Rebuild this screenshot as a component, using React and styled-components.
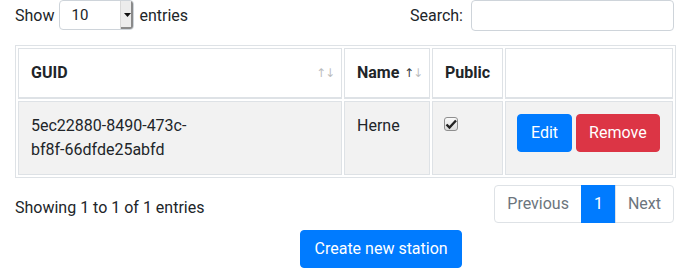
import styled, { createGlobalStyle } from 'styled-components';

const GlobalStyle = createGlobalStyle`
  *, *::before, *::after { box-sizing: border-box; }
  body {
    margin: 0;
    background: #fff;
    font-family: Roboto, "Liberation Sans", sans-serif;
    font-size: 16px;
    line-height: 1.5;
    color: #212529;
  }
`;

const Page = styled.div`
  width: 659px;
  margin-left: 15px;
  display: flex;
  flex-direction: column;
`;

const TopBar = styled.div`
  height: 31px;
  display: flex;
  align-items: center;
  justify-content: space-between;
`;

const Label = styled.label`
  display: flex;
  align-items: center;
  gap: ${(p) => p.gap || 5}px;
`;

const SelectBox = styled.div`
  width: 75px;
  height: 30px;
  margin-top: -1px;
  display: flex;
  border: 1px solid #ced4da;
  border-radius: 4px;
  background: #fff;
  overflow: hidden;
`;

const SelectValue = styled.span`
  flex: 1;
  padding-left: 11px;
  line-height: 28px;
  font-size: 15px;
`;

const SelectArrow = styled.span`
  width: 13px;
  display: flex;
  align-items: center;
  justify-content: center;
  background: #ececec;
  border-left: 1px solid #d8d8d8;
  box-shadow: inset -2px -2px 0 #8a8a8a;
`;

const SearchInput = styled.div`
  width: 203px;
  height: 31px;
  margin-top: -1px;
  border: 1px solid #ced4da;
  border-radius: 4px;
  background: #fff;
`;

const Table = styled.table`
  width: 659px;
  margin-top: 14px;
  table-layout: fixed;
  border: 1px solid #dee2e6;
  border-collapse: separate;
  border-spacing: 2px;
`;

const Th = styled.th`
  width: ${(p) => p.w}px;
  padding: 12px;
  text-align: left;
  font-weight: 700;
  vertical-align: bottom;
  border: 1px solid #dee2e6;
  border-bottom-width: 2px;
`;

const HeadInner = styled.div`
  display: flex;
  align-items: center;
  justify-content: space-between;
  margin-right: -5px;
`;

const SortIcons = styled.span`
  font-family: "DejaVu Sans", sans-serif;
  font-size: 12px;
  font-weight: 400;
  letter-spacing: -1px;
  color: #212529;
`;

const Arrow = styled.span`
  opacity: ${(p) => (p.active ? 0.9 : 0.3)};
`;

const Row = styled.tr`
  background: #f2f2f2;
`;

const Td = styled.td`
  padding: 12px;
  vertical-align: top;
  border: 1px solid #dee2e6;
`;

const Check = styled.span`
  display: flex;
  align-items: center;
  justify-content: center;
  width: 14px;
  height: 14px;
  margin-top: 3px;
  margin-left: -1px;
  border: 1px solid #8f8f8f;
  border-radius: 3px;
  background: linear-gradient(#fafafa, #dcdcdc);
`;

const Actions = styled.div`
  display: flex;
  gap: 4px;
  margin-left: -1px;
`;

const Button = styled.button`
  padding: 6px ${(p) => p.px || 12}px;
  font-family: inherit;
  font-size: 16px;
  line-height: 24px;
  color: #fff;
  border: 1px solid ${(p) => (p.danger ? '#dc3545' : '#007bff')};
  border-radius: 4px;
  background: ${(p) => (p.danger ? '#dc3545' : '#007bff')};
`;

const Footer = styled.div`
  margin-top: 7px;
  display: flex;
  align-items: center;
  justify-content: space-between;
`;

const Info = styled.div`
  padding-top: 8px;
`;

const Pager = styled.ul`
  display: flex;
  margin: 0;
  padding: 0;
  list-style: none;
`;

const PageItem = styled.li`
  padding: 6px 12px;
  line-height: 24px;
  color: ${(p) => (p.active ? '#fff' : '#6c757d')};
  background: ${(p) => (p.active ? '#007bff' : '#fff')};
  border: 1px solid ${(p) => (p.active ? '#007bff' : '#dee2e6')};
  margin-left: -1px;
  &:first-child {
    margin-left: 0;
    border-radius: 4px 0 0 4px;
  }
  &:last-child {
    border-radius: 0 4px 4px 0;
  }
`;

const CreateRow = styled.div`
  margin-top: 7px;
  padding-left: 285px;
  display: flex;
`;

export default function App() {
  return (
    <>
      <GlobalStyle />
      <Page>
        <TopBar>
          <Label>
            Show
            <SelectBox>
              <SelectValue>10</SelectValue>
              <SelectArrow>
                <svg width="7" height="4" viewBox="0 0 7 4">
                  <path d="M0 0h7L3.5 4z" fill="#111" />
                </svg>
              </SelectArrow>
            </SelectBox>
            entries
          </Label>
          <Label gap={8}>
            Search:
            <SearchInput />
          </Label>
        </TopBar>
        <Table>
          <thead>
            <tr>
              <Th w={324}>
                <HeadInner>
                  GUID
                  <SortIcons>
                    <Arrow>↑</Arrow>
                    <Arrow>↓</Arrow>
                  </SortIcons>
                </HeadInner>
              </Th>
              <Th w={86}>
                <HeadInner>
                  Name
                  <SortIcons>
                    <Arrow active>↑</Arrow>
                    <Arrow>↓</Arrow>
                  </SortIcons>
                </HeadInner>
              </Th>
              <Th w={71}>Public</Th>
              <Th w={168}></Th>
            </tr>
          </thead>
          <tbody>
            <Row>
              <Td>
                5ec22880-8490-473c-
                <br />
                bf8f-66dfde25abfd
              </Td>
              <Td>Herne</Td>
              <Td>
                <Check>
                  <svg width="12" height="11" viewBox="0 0 12 11">
                    <path d="M1.5 5.5l3 3L11 1.5" fill="none" stroke="#222" strokeWidth="2.4" />
                  </svg>
                </Check>
              </Td>
              <Td>
                <Actions>
                  <Button px={13}>Edit</Button>
                  <Button danger>Remove</Button>
                </Actions>
              </Td>
            </Row>
          </tbody>
        </Table>
        <Footer>
          <Info>Showing 1 to 1 of 1 entries</Info>
          <Pager>
            <PageItem>Previous</PageItem>
            <PageItem active>1</PageItem>
            <PageItem>Next</PageItem>
          </Pager>
        </Footer>
        <CreateRow>
          <Button px={13.5}>Create new station</Button>
        </CreateRow>
      </Page>
    </>
  );
}
